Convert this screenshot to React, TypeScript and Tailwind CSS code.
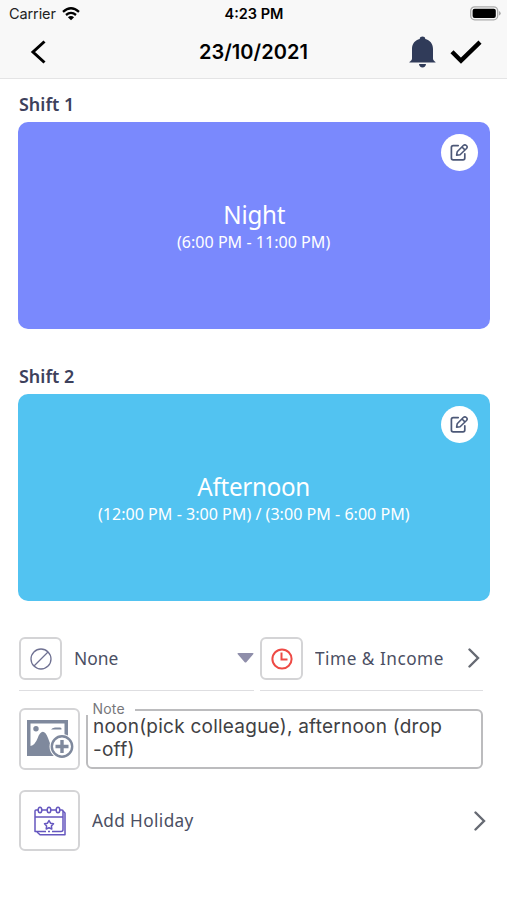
const shifts = [
  {
    label: "Shift 1",
    name: "Night",
    hours: "(6:00 PM - 11:00 PM)",
    color: "bg-[#7a89fd]",
  },
  {
    label: "Shift 2",
    name: "Afternoon",
    hours: "(12:00 PM - 3:00 PM) / (3:00 PM - 6:00 PM)",
    color: "bg-[#52c3f1]",
  },
]

function EditIcon() {
  return (
    <svg className="h-[19px] w-[19px]" viewBox="0 0 19 19" fill="none" stroke="#4c5877" strokeWidth="1.7" strokeLinecap="round" strokeLinejoin="round">
      <path d="M8.2 2.6H3.2Q1.4 2.6 1.4 4.4V15Q1.4 16.8 3.2 16.8H13Q14.8 16.8 14.8 15V10.8" />
      <path d="M6.6 12.2L7.2 8.8L13.3 2.5Q14.8 1.1 16.4 2.5Q17.9 4 16.5 5.5L10.1 11.7Z M12 4L14.9 6.9" strokeWidth="1.6" />
    </svg>
  )
}

function Chevron() {
  return (
    <svg className="h-5 w-3 shrink-0" viewBox="0 0 12 20" fill="none" stroke="#666a73" strokeWidth="2.4" strokeLinecap="round">
      <path d="M1.5 1.5L10 10L1.5 18.5" />
    </svg>
  )
}

function Header() {
  return (
    <header className="h-[79px] border-b border-[#e4e4e5] bg-[#f8f8f8] font-['Inter',sans-serif]">
      {/* Status bar */}
      <div className="grid h-[27px] grid-cols-[1fr_auto_1fr] items-center pl-[7px] pr-[6px] text-black">
        <div className="flex items-center gap-[6px] pl-0.5">
          <span className="text-[14.5px] tracking-[-0.1px] text-[#222]">Carrier</span>
          <svg className="h-[14px] w-[18px]" viewBox="0 0 18 14" fill="none" stroke="#000" strokeWidth="2.3">
            <path d="M1 4.8Q9 -2.2 17 4.8" />
            <path d="M4 8Q9 3.8 14 8" />
            <path d="M9 13.3L5.9 10.2Q9 7.7 12.1 10.2Z" fill="#000" stroke="none" />
          </svg>
        </div>
        <span className="text-[14.5px] font-semibold">4:23 PM</span>
        <svg className="h-[15px] w-[31px] justify-self-end" viewBox="0 0 31 15">
          <rect x="0.7" y="0.8" width="27" height="13" rx="4" fill="#f8f8f8" stroke="#aaa" strokeWidth="1.3" />
          <rect x="2.6" y="2.7" width="23.2" height="9.2" rx="2" />
          <path d="M29 5Q30.7 5.7 30.7 7.3Q30.7 8.9 29 9.6Z" fill="#aaa" />
        </svg>
      </div>

      {/* Navigation */}
      <div className="grid h-[50px] grid-cols-[1fr_auto_1fr] items-center pl-[25px] pr-[25px]">
        <svg className="ml-[5px] h-6 w-4" viewBox="0 0 16 24" fill="none" stroke="#000" strokeWidth="3">
          <path d="M14.5 1.5L3 12L14.5 22.5" />
        </svg>
        <h1 className="text-[20px] font-semibold tracking-[0.05px] text-black">23/10/2021</h1>
        <div className="flex items-center justify-end gap-[14px]">
          <svg className="h-8 w-[27px]" viewBox="0 0 27 32" fill="#303b59">
            <path d="M0.3 26.5C0.3 25.2 3 25 3 22.4V13C3 7.4 6.3 4 10.7 3C10.8 -0.2 16.2 -0.2 16.3 3C20.7 4 24 7.4 24 13V22.4C24 25 26.7 25.2 26.7 26.5Z" />
            <path d="M10 28H17Q16.6 31.4 13.5 31.4Q10.4 31.4 10 28Z" />
          </svg>
          <svg className="h-6 w-8" viewBox="0 0 32 24" fill="none" stroke="#000" strokeWidth="4.4">
            <path d="M2 11.7L11 20.7L30 2.2" />
          </svg>
        </div>
      </div>
    </header>
  )
}

export default function App() {
  return (
    <div className="h-[900px] w-[507px] overflow-hidden bg-white font-['Noto_Sans',sans-serif] text-[#4b4f63]">
      <Header />

      {/* Shifts */}
      <main className="pl-[18px] pr-[17px]">
        {shifts.map((shift, index) => (
          <section key={shift.label} className={index === 0 ? "mb-[22px]" : ""}>
            <h2 className="flex h-[43px] items-center pt-[6px] pl-px text-[18.5px] font-semibold text-[#3d415c]">
              <span className="inline-block origin-left scale-x-[0.97]">{shift.label}</span>
            </h2>
            <div className={`relative flex h-[207px] flex-col items-center justify-center rounded-[10px] pt-0.5 text-white ${shift.color}`}>
              <span className="scale-x-[0.93] text-[26px] leading-[30px] tracking-[-0.3px]">{shift.name}</span>
              <span className="scale-x-[0.975] whitespace-nowrap text-[16.5px] leading-[26px]">{shift.hours}</span>
              <button className="absolute right-3 top-3 flex h-[37px] w-[37px] items-center justify-center rounded-full bg-white">
                <EditIcon />
              </button>
            </div>
          </section>
        ))}

        {/* Overtime and income */}
        <div className="mt-[36px] flex gap-[6px] pl-px text-[18.5px]">
          <div className="flex h-[54px] w-[235px] items-start border-b border-[#dedee1]">
            <div className="flex h-[43px] w-[43px] items-center justify-center rounded-[6px] border-2 border-[#d4d4d6]">
              <svg className="h-[22px] w-[22px]" viewBox="0 0 22 22" fill="none" stroke="#6f7192" strokeWidth="1.3">
                <circle cx="11" cy="11" r="10" />
                <path d="M4 18L18 4" />
              </svg>
            </div>
            <div className="flex h-[42px] flex-1 items-center justify-between pl-3">
              <span className="inline-block origin-left scale-x-[0.94]">None</span>
              <svg className="h-[10px] w-[17px]" viewBox="0 0 17 10" fill="#8f8eaa">
                <path d="M1.5 0H15.5Q17.3 0 16 1.5L9.5 9Q8.5 10 7.5 9L1 1.5Q-0.3 0 1.5 0Z" />
              </svg>
            </div>
          </div>
          <div className="flex h-[54px] w-[223px] items-start border-b border-[#dedee1]">
            <div className="flex h-[43px] w-[43px] shrink-0 items-center justify-center rounded-[6px] border-2 border-[#d4d4d6]">
              <svg className="h-[22px] w-[22px]" viewBox="0 0 22 22" fill="none" stroke="#ee4a45" strokeWidth="2">
                <circle cx="11" cy="11" r="9.6" />
                <path d="M10.5 4.5V11.5H16.5" />
              </svg>
            </div>
            <div className="flex h-[42px] flex-1 items-center justify-between pl-3 pr-[3px]">
              <span className="w-[140px] origin-left scale-x-[0.93] whitespace-nowrap tracking-[0.55px]">Time &amp; Income</span>
              <Chevron />
            </div>
          </div>
        </div>

        {/* Note */}
        <div className="mt-[17px] flex gap-[6px] pl-px">
          <div className="flex h-[62px] w-[61px] items-center justify-center rounded-[6px] border-2 border-[#d4d4d6]">
            <svg className="h-[40px] w-[48px]" viewBox="0 0 48 40">
              <path fillRule="evenodd" d="M1 1H42V37H1ZM4.5 4.5V27Q9 26 11.5 19.5C14.5 11 18.8 10.5 22 19L25 27L38.5 18V4.5Z" fill="#7f899d" />
              <circle cx="10" cy="9.7" r="2.7" fill="#7f899d" />
              <path d="M25 10.5Q26 9 29 8.5H34Q36 8.5 35.5 10.5Z" fill="#7f899d" />
              <circle cx="36" cy="27.5" r="12.5" fill="#fff" />
              <circle cx="36" cy="27.5" r="10.2" fill="none" stroke="#7f899d" strokeWidth="2.4" />
              <path d="M36 21V34M29.5 27.5H42.5" stroke="#7f899d" strokeWidth="3.4" />
            </svg>
          </div>
          <div className="relative mt-px h-[60px] w-[397px] rounded-[6px] border-2 border-[#bcbcbe] pl-[5px] pt-1 font-['Inter',sans-serif]">
            <span className="absolute -left-0.5 -top-2 h-3 w-[49px] bg-white pl-[6.5px] text-[14px] leading-3 tracking-[0.2px] text-[#77777b]">Note</span>
            <p className="relative whitespace-nowrap text-[19px] leading-[23px] tracking-[0.24px] text-[#414144]">
              noon(pick colleague), afternoon (drop
              <br />
              -off)
            </p>
          </div>
        </div>

        {/* Holiday */}
        <div className="mt-5 flex items-center pl-px pr-[4px] text-[18.5px]">
          <div className="flex h-[61px] w-[61px] items-center justify-center rounded-[6px] border-2 border-[#d4d4d6]">
            <svg className="h-[30px] w-[32px]" viewBox="0 0 32 30" fill="none" stroke="#6557bf" strokeWidth="1.5" strokeLinejoin="round">
              <path d="M4 4H2Q1 4 1 5V25.5H12M14 25.5H16M18 25.5H27Q29 25.5 29 23.5V5Q29 4 28 4H26M8 4H13M17 4H22M1 11H29" />
              <path d="M3 26L6 28.7H31V7L29 5" />
              <ellipse cx="6" cy="4" rx="1.8" ry="2.8" />
              <ellipse cx="15" cy="4" rx="1.8" ry="2.8" />
              <ellipse cx="24" cy="4" rx="1.8" ry="2.8" />
              <path d="M15 14.5L16.5 17.2L19.5 17.8L17.4 20L17.8 23L15 21.7L12.2 23L12.6 20L10.5 17.8L13.5 17.2Z" />
            </svg>
          </div>
          <span className="mb-px ml-3 mr-auto origin-left scale-x-[0.93] tracking-[0.4px]">Add Holiday</span>
          <Chevron />
        </div>
      </main>
    </div>
  )
}
